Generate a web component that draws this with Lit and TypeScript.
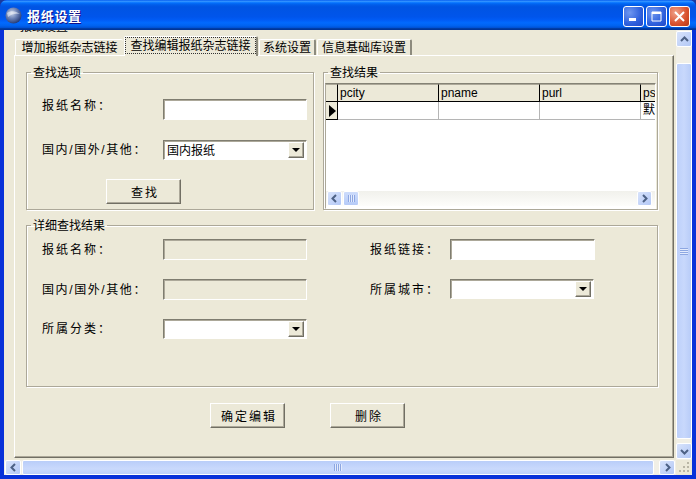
import { LitElement, html, css } from "lit";
import { customElement } from "lit/decorators.js";

const chevron = (d: string) => html`<svg width="9" height="9" viewBox="0 0 9 9"><path d=${d} fill="none" stroke="#4d6185" stroke-width="2"/></svg>`;
const UP = "M1 6 L4.5 2.5 L8 6";
const DOWN = "M1 3 L4.5 6.5 L8 3";
const LEFT = "M6 1 L2.5 4.5 L6 8";
const RIGHT = "M3 1 L6.5 4.5 L3 8";

@customElement("app-root")
export class AppRoot extends LitElement {
  static styles = css`
    :host { display: block; width: 696px; height: 479px; overflow: hidden; background: #1a3a9c;
      font-family: "Liberation Sans", "Noto Sans CJK SC", sans-serif; font-size: 12px; color: #000; }
    * { box-sizing: border-box; }
    .win { width: 696px; height: 479px; display: grid; grid-template-rows: 30px 445px 4px; border-radius: 7px 7px 0 0; overflow: hidden;
      background: #0831d9; }
    .title { display: flex; align-items: center; padding: 0 6px 0 5px;
      background: linear-gradient(180deg, #0058ee 0%, #3593ff 4%, #288eff 6%, #127dff 8%, #036ffc 10%, #0262ee 14%, #0057e5 20%, #0054e3 24%, #0055eb 56%, #005bf5 66%, #026afe 76%, #0062ef 86%, #0052d6 92%, #0040ab 94%, #003092 100%); }
    .icon { margin: 1px 5px 0 0; flex: none; }
    .ttext { flex: 1; color: #fff; font: bold 13px "Noto Sans CJK SC", sans-serif; letter-spacing: .7px; text-shadow: 1px 1px #0f1089; line-height: 16px; margin-top: 1px; }
    .wb { width: 21px; height: 21px; border: 1px solid #fff; border-radius: 3px; margin: 3px 0 0 2px; flex: none; display: flex; align-items: center; justify-content: center;
      background: radial-gradient(circle at 30% 30%, #6f97f0 0%, #2e60dc 60%, #2148c8 100%); }
    .wb.close { background: radial-gradient(circle at 30% 30%, #f0a28a 0%, #d9512d 60%, #b93a16 100%); }
    .client { margin: 0 4px; display: grid; grid-template-columns: 672px 16px; grid-template-rows: 430px 15px; background: #ece9d8; }
    .main { padding-left: 10px; overflow: hidden; }
    .clip { height: 6px; overflow: hidden; padding-left: 6px; line-height: 12px; }
    .clip span { display: block; margin-top: -9px; }
    .tabs { display: flex; height: 19px; padding-left: 1px; align-items: flex-end; position: relative; z-index: 1; }
    .tab { height: 16px; line-height: 17px; text-align: center; background: #ece9d8; margin-right: 1px;
      border: 1px solid #fff; border-right: 2px solid #8d8b7e; border-bottom: 0; border-radius: 2px 2px 0 0; }
    .tab.first { border-right: 0; }
    .tab.sel { height: 20px; margin-bottom: -1px; padding: 0; }
    .tab.sel span { display: block; height: 17px; line-height: 16px; border: 1px dotted #333; }
    .w1 { width: 108px; } .w2 { width: 134px; } .w3 { width: 57px; } .w4 { width: 95px; }
    .panel { width: 660px; height: 403px; border: 1px solid; border-color: #fff #716f64 #716f64 #fff; box-shadow: inset -1px -1px #aca899;
      padding: 9px 0 0 11px; }
    .top { display: grid; grid-template-columns: 288px 335px; column-gap: 9px; height: 145px; }
    fieldset { margin: 0; padding: 0; min-width: 0; border: 1px solid #aca899; box-shadow: inset 1px 1px #fff, 1px 1px #fff; }
    legend { margin-left: 4px; padding: 2px 2px 0; line-height: 13px; font-size: 12px; white-space: nowrap; }
    .opt { display: grid; grid-template-columns: 121px 144px; grid-template-rows: 21px 20px 25px; row-gap: 20px; padding: 19px 0 0 15px; align-items: center; align-content: start; }
    .lab { letter-spacing: 2px; white-space: nowrap; line-height: 14px; }
    .lab.n { letter-spacing: 1.6px; }
    .lab.up { margin-top: -8px; }
    input { display: block; width: 144px; height: 21px; padding: 0 3px; margin: 0; font: inherit; background: #fff; border: 1px solid; border-color: #7f7d70 #fff #fff #7f7d70; box-shadow: inset 1px 1px #aca899; outline: none; }
    input.wide { width: 145px; }
    input:disabled { background: #ece9d8; }
    .combo { width: 144px; height: 20px; display: flex; align-items: center; justify-content: space-between; background: #fff; padding: 2px 2px 2px 3px; border: 1px solid; border-color: #7f7d70 #fff #fff #7f7d70; box-shadow: inset 1px 1px #aca899; align-self: start; }
    .val { padding-bottom: 2px; }
    .cb { width: 16px; height: 16px; flex: none; display: flex; align-items: center; justify-content: center; background: #ece9d8; border: 1px solid; border-color: #fff #716f64 #716f64 #fff; box-shadow: inset -1px -1px #aca899; }
    .btn { width: 75px; height: 25px; display: flex; align-items: center; justify-content: center; background: #ece9d8; letter-spacing: 2px; border: 1px solid; border-color: #fff #716f64 #716f64 #fff; box-shadow: inset -1px -1px #aca899; padding: 0 0 1px 3px; font: inherit; color: inherit; }
    .opt .btn { grid-column: 1 / 3; margin-left: 64px; margin-top: -2px; }
    .gridbox { margin: 3px 1px 0 1px; height: 126px; overflow: hidden; background: #fff; border: 1px solid; border-color: #848275 #fff #fff #aca899; display: flex; flex-direction: column; }
    .dg { display: grid; grid-template-columns: 12px 101px 101px 101px 15px; grid-template-rows: 18px 18px; overflow: hidden; }
    .h { background: #ece9d8; border-right: 1px solid #000; border-bottom: 1px solid #000; line-height: 15px; padding: 1px 0 0 2px; overflow: hidden; border-top: 1px solid #aca899; }
    .h.last { border-right: 0; }
    .c { border-right: 1px solid #b5b5b5; border-bottom: 1px solid #b5b5b5; overflow: hidden; line-height: 16px; padding-left: 2px; white-space: nowrap; }
    .c.last { border-right: 0; }
    .ind { background: #ece9d8; border-right: 1px solid #000; border-bottom: 1px solid #000; display: flex; align-items: center; padding-left: 3px; }
    .fill { flex: 1; }
    .gsb { height: 15px; margin-bottom: 2px; display: flex; align-items: center; gap: 1px; padding: 0 3px 0 1px; background: linear-gradient(180deg, #f1f1ec, #fdfdfb); }
    .sbtn { width: 15px; height: 15px; flex: none; display: flex; align-items: center; justify-content: center; border: 1px solid #fff; border-radius: 2px; background: linear-gradient(135deg, #d8e3fb, #b3c8f6); }
    .gthumb { width: 16px; height: 15px; flex: none; border: 1px solid #fff; border-radius: 2px; background: linear-gradient(180deg, #cddcfb, #b6cbf8); display: flex; align-items: center; justify-content: center; }
    .gg { width: 7px; height: 7px; background: repeating-linear-gradient(90deg, #8da7e2 0 1px, #e3ebfd 1px 2px); }
    .detail { margin-top: 8px; height: 169px; width: 632px; }
    .det { display: grid; grid-template-columns: 121px 144px 63px 80px 145px; grid-template-rows: 21px 21px 20px; row-gap: 19px; padding: 6px 0 0 15px; align-items: center; }
    .acts { display: flex; gap: 45px; padding: 16px 0 0 184px; }
    .vs { grid-row: 1 / 2; grid-column: 2; display: flex; flex-direction: column; background: #f1efe6; padding: 1px 0 1px 0; align-items: stretch; }
    .vs .sbtn { width: 16px; height: 16px; }
    .vthumb { margin: 16px 0 4px; flex: 1; border: 1px solid #fff; border-radius: 2px; background: linear-gradient(90deg, #bdd0fa, #c8d8fc 50%, #b8ccf8); display: flex; align-items: center; justify-content: center; }
    .vg { width: 8px; height: 7px; background: repeating-linear-gradient(180deg, #8da7e2 0 1px, #e3ebfd 1px 2px); }
    .hs { display: flex; background: #f1efe6; gap: 1px; padding: 0 1px; align-items: center; }
    .hs .sbtn { width: 16px; height: 15px; }
    .hs .sbtn.end { margin-left: auto; }
    .hthumb { width: 632px; height: 15px; border: 1px solid #fff; border-radius: 2px; background: linear-gradient(180deg, #b9cdf9, #c9d9fc 60%, #bdd0fa); display: flex; align-items: center; justify-content: center; }
    .hthumb .gg { width: 8px; }
    .corner { background: #ece9d8; display: flex; align-items: flex-end; justify-content: flex-end; padding: 0 2px 2px 0; }
  `;

  private combo(text = "") {
    return html`<div class="combo"><span class="val">${text}</span><span class="cb"><svg width="8" height="4" viewBox="0 0 8 4"><path d="M0 0H8L4 4Z" fill="#000"/></svg></span></div>`;
  }

  render() {
    return html`
    <div class="win">
      <div class="title">
        <svg class="icon" width="17" height="17" viewBox="0 0 17 17"><defs><radialGradient id="g" cx="0.4" cy="0.35" r="0.7"><stop offset="0" stop-color="#c8d4ea"/><stop offset=".5" stop-color="#6a80b4"/><stop offset="1" stop-color="#1f3570"/></radialGradient></defs><circle cx="8.5" cy="8.5" r="8" fill="url(#g)"/><path d="M2 6 C6 3 11 4 15 7 C11 6 6 7 3 10Z" fill="#fff" opacity=".5"/></svg>
        <span class="ttext">报纸设置</span>
        <span class="wb"><svg width="13" height="13" viewBox="0 0 13 13"><rect x="2" y="8" width="7" height="3" fill="#fff"/></svg></span>
        <span class="wb"><svg width="13" height="13" viewBox="0 0 13 13"><path d="M2 2H11V11H2Z" fill="none" stroke="#fff" stroke-width="1"/><rect x="2" y="2" width="9" height="2" fill="#fff"/></svg></span>
        <span class="wb close"><svg width="13" height="13" viewBox="0 0 13 13"><path d="M2 2L11 11M11 2L2 11" stroke="#fff" stroke-width="2"/></svg></span>
      </div>
      <div class="client">
        <div class="main">
          <div class="clip"><span>报纸设置</span></div>
          <div class="tabs">
            <div class="tab first w1">增加报纸杂志链接</div>
            <div class="tab sel w2"><span>查找编辑报纸杂志链接</span></div>
            <div class="tab w3">系统设置</div>
            <div class="tab w4">信息基础库设置</div>
          </div>
          <div class="panel">
            <div class="top">
              <fieldset>
                <legend>查找选项</legend>
                <div class="opt">
                  <span class="lab up">报纸名称：</span><input />
                  <span class="lab n">国内/国外/其他：</span>${this.combo("国内报纸")}
                  <button class="btn">查找</button>
                </div>
              </fieldset>
              <fieldset>
                <legend>查找结果</legend>
                <div class="gridbox">
                  <div class="dg">
                    <div class="h"></div><div class="h">pcity</div><div class="h">pname</div><div class="h">purl</div><div class="h last">ps</div>
                    <div class="ind"><svg width="7" height="12" viewBox="0 0 7 12"><path d="M0 0L7 6L0 12Z" fill="#000"/></svg></div>
                    <div class="c"></div><div class="c"></div><div class="c"></div><div class="c last">默</div>
                  </div>
                  <div class="fill"></div>
                  <div class="gsb">
                    <span class="sbtn">${chevron(LEFT)}</span>
                    <span class="gthumb"><span class="gg"></span></span>
                    <span class="fill"></span>
                    <span class="sbtn">${chevron(RIGHT)}</span>
                  </div>
                </div>
              </fieldset>
            </div>
            <fieldset class="detail">
              <legend>详细查找结果</legend>
              <div class="det">
                <span class="lab">报纸名称：</span><input disabled /><span></span>
                <span class="lab">报纸链接：</span><input class="wide" />
                <span class="lab n">国内/国外/其他：</span><input disabled /><span></span>
                <span class="lab">所属城市：</span>${this.combo()}
                <span class="lab">所属分类：</span>${this.combo()}
              </div>
            </fieldset>
            <div class="acts">
              <button class="btn">确定编辑</button>
              <button class="btn">删除</button>
            </div>
          </div>
        </div>
        <div class="vs">
          <span class="sbtn">${chevron(UP)}</span>
          <span class="vthumb"><span class="vg"></span></span>
          <span class="sbtn">${chevron(DOWN)}</span>
        </div>
        <div class="hs">
          <span class="sbtn">${chevron(LEFT)}</span>
          <span class="hthumb"><span class="gg"></span></span>
          <span class="sbtn end">${chevron(RIGHT)}</span>
        </div>
        <div class="corner"><svg width="11" height="11" viewBox="0 0 11 11" fill="#b9b6a5"><rect x="8" y="0" width="2" height="2"/><rect x="4" y="4" width="2" height="2"/><rect x="8" y="4" width="2" height="2"/><rect x="0" y="8" width="2" height="2"/><rect x="4" y="8" width="2" height="2"/><rect x="8" y="8" width="2" height="2"/></svg></div>
      </div>
      <div></div>
    </div>`;
  }
}
